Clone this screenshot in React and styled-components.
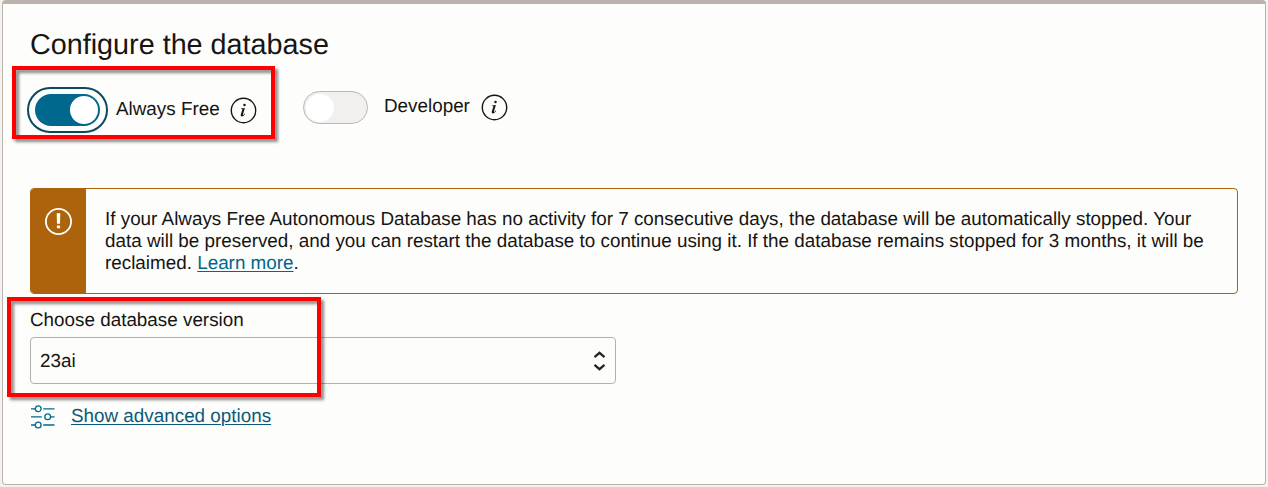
import React from "react";
import styled, { createGlobalStyle } from "styled-components";

const GlobalStyle = createGlobalStyle`
  *, *::before, *::after { box-sizing: border-box; }
  body {
    margin: 0;
    background: #f4f2f1;
    color: #161513;
    font-family: "Liberation Sans", Arial, sans-serif;
    font-size: 18.85px;
    line-height: 22px;
    text-rendering: geometricPrecision;
  }
`;

const Page = styled.div`
  position: relative;
  height: 487px;
  padding: 0 2px 2px;
  overflow: hidden;
`;

const Card = styled.section`
  height: 485px;
  padding: 24px 27px 0;
  background: #fdfdfb;
  border: 1px solid #bbb3ab;
  border-top-width: 4px;
  border-radius: 4px;
`;

const Title = styled.h2`
  margin: 0;
  font-size: 28.75px;
  font-weight: 400;
  line-height: 34px;
`;

const ToggleRow = styled.div`
  display: flex;
  align-items: flex-start;
  height: 101px;
  margin-top: 25px;
`;

const ToggleField = styled.div`
  display: flex;
  align-items: flex-start;
  margin-left: ${(p) => p.$left}px;
  padding-top: ${(p) => p.$top}px;
`;

const FocusRing = styled.div`
  margin: -7px -8px;
  padding: 5px 6px;
  border: 2px solid #0b4a61;
  border-radius: 23px;
`;

const Switch = styled.button`
  display: flex;
  align-items: center;
  justify-content: ${(p) => (p.$on ? "flex-end" : "flex-start")};
  width: 65px;
  height: ${(p) => (p.$on ? 32 : 33)}px;
  padding: 0 ${(p) => (p.$on ? 2 : 2)}px;
  border: ${(p) => (p.$on ? "0" : "1px solid #bcb6b1")};
  border-radius: 17px;
  background: ${(p) => (p.$on ? "#00688c" : "#f1f0ee")};
`;

const Knob = styled.span`
  width: 28px;
  height: 28px;
  border-radius: 50%;
  background: #fff;
`;

const FieldLabel = styled.span`
  width: ${(p) => p.$width}px;
  margin: 4px 0 0 16px;
  white-space: nowrap;
`;

const InfoSvg = styled.svg`
  display: block;
  margin: 3px 0 0;
`;

const Banner = styled.div`
  display: flex;
  width: 1208px;
  height: 106px;
  border: 1px solid #ac630c;
  border-radius: 4px;
  overflow: hidden;
`;

const BannerIcon = styled.div`
  flex: none;
  width: 55px;
  padding: 18px 0 0 13px;
  background: #ac630c;
`;

const BannerText = styled.p`
  margin: 0;
  padding: 19px 0 0 19px;
  white-space: nowrap;
`;

const Link = styled.a`
  color: ${(p) => p.$color || "#00688c"};
  text-decoration: underline;
  text-decoration-thickness: 1px;
  text-underline-offset: 2px;
`;

const Label = styled.div`
  margin-top: 15px;
`;

const Select = styled.div`
  display: flex;
  align-items: center;
  justify-content: space-between;
  width: 586px;
  height: 47px;
  margin-top: 6px;
  padding: 0 9px;
  border: 1px solid #b5b0ac;
  border-radius: 4px;
`;

const Advanced = styled.div`
  display: flex;
  gap: 16px;
  margin-top: 21px;
`;

const Highlight = styled.div`
  position: absolute;
  left: ${(p) => p.$x}px;
  top: ${(p) => p.$y}px;
  width: ${(p) => p.$w}px;
  height: ${(p) => p.$h}px;
  border: 4px solid #ff0000;
  filter: drop-shadow(3px 3px 1.5px rgba(0, 0, 0, 0.45));
  pointer-events: none;
`;

function InfoIcon() {
  return (
    <InfoSvg width="27" height="27" viewBox="0 0 27 27" aria-label="Information">
      <circle cx="13.5" cy="13.5" r="12.2" fill="none" stroke="#161513" strokeWidth="1.4" />
      <circle cx="14.5" cy="7.9" r="1.25" fill="#161513" />
      <path d="M11 11.5l3.9-.5-2 6.5c-.15.6.15.7.6.3l1.2-1.2.4.4c-1.2 1.6-2.2 2.4-3.2 2.4-1.1 0-1.4-.8-1.1-1.9l1.5-4.7c.1-.5-.1-.7-1.4-.7z" fill="#161513" />
    </InfoSvg>
  );
}

function WarningIcon() {
  return (
    <svg width="29" height="29" viewBox="0 0 29 29">
      <circle cx="14.5" cy="14.5" r="12.6" fill="none" stroke="#fff" strokeWidth="1.8" />
      <path d="M12.7 6.2h3.6l-.3 10.5h-3zM12.9 18.6h3.2v2.7h-3.2z" fill="#fff" />
    </svg>
  );
}

function SlidersIcon() {
  return (
    <svg width="25" height="25" viewBox="0 0 25 25" fill="none" stroke="#00688c" strokeWidth="1.3">
      <path d="M1 3.8h4M13.2 3.8h11.3M1 11.8h10.8M20.5 11.8h4M1 20h4M13.2 20h11.3" />
      <circle cx="8.2" cy="3.8" r="2.9" />
      <circle cx="17.7" cy="11.8" r="2.9" />
      <circle cx="8.2" cy="20" r="2.9" />
    </svg>
  );
}

function SelectArrows() {
  return (
    <svg width="13" height="21" viewBox="0 0 13 21" fill="none" stroke="#262422" strokeWidth="2.2">
      <path d="M1.5 7.2l5-4.4 5 4.4M1.5 14.8l5 4.4 5-4.4" />
    </svg>
  );
}

export default function App() {
  return (
    <>
      <GlobalStyle />
      <Page>
        <Card>
          <Title>Configure the database</Title>
          <ToggleRow>
            <ToggleField $left={5} $top={7}>
              <FocusRing>
                <Switch $on aria-label="Always Free"><Knob /></Switch>
              </FocusRing>
              <FieldLabel $width={114}>Always Free</FieldLabel>
              <InfoIcon />
            </ToggleField>
            <ToggleField $left={46} $top={4}>
              <Switch aria-label="Developer"><Knob /></Switch>
              <FieldLabel $width={97}>Developer</FieldLabel>
              <InfoIcon />
            </ToggleField>
          </ToggleRow>
          <Banner>
            <BannerIcon><WarningIcon /></BannerIcon>
            <BannerText>
              If your Always Free Autonomous Database has no activity for 7 consecutive days, the database will be automatically stopped. Your<br />
              data will be preserved, and you can restart the database to continue using it. If the database remains stopped for 3 months, it will be<br />
              reclaimed. <Link>Learn more</Link>.
            </BannerText>
          </Banner>
          <Label>Choose database version</Label>
          <Select><span>23ai</span><SelectArrows /></Select>
          <Advanced>
            <SlidersIcon />
            <Link $color="#0b5a7a">Show advanced options</Link>
          </Advanced>
        </Card>
        <Highlight $x={12} $y={66} $w={263} $h={73} />
        <Highlight $x={7} $y={297} $w={314} $h={100} />
      </Page>
    </>
  );
}
